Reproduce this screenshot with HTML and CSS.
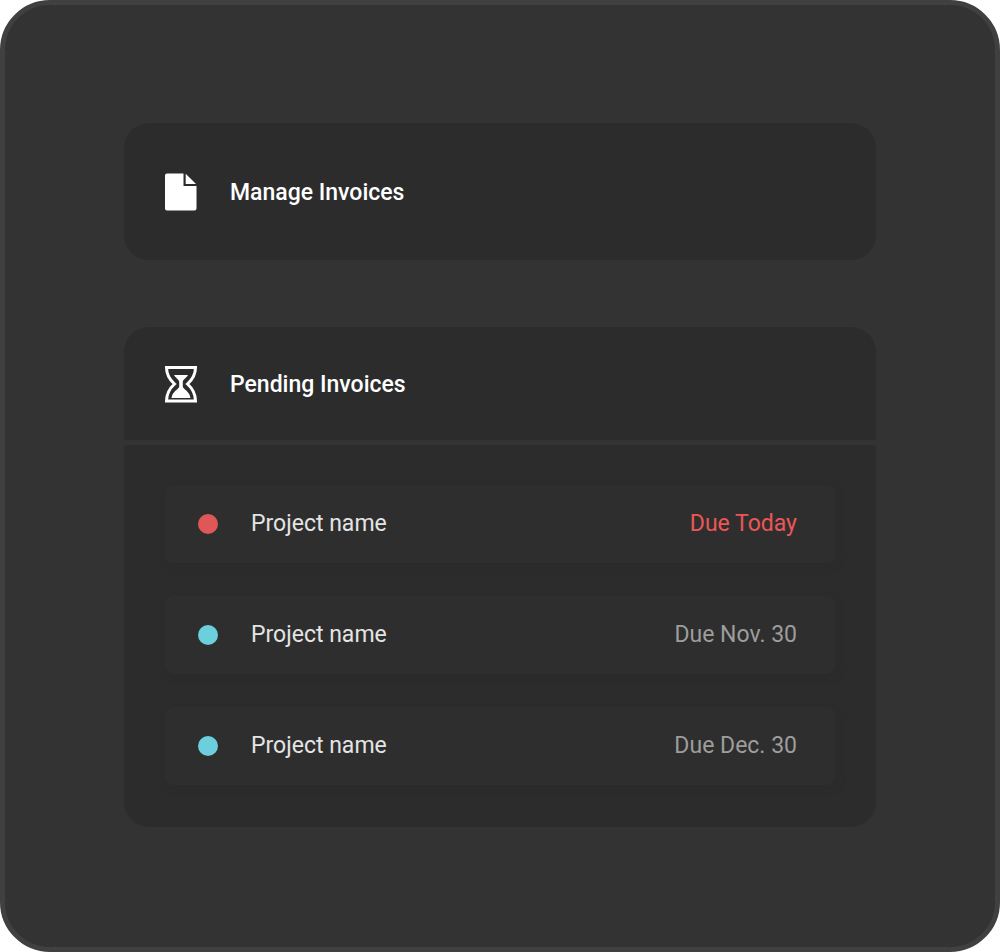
FILE: index.html
```html
<!DOCTYPE html>
<html lang="en">
<head>
<meta charset="utf-8">
<meta name="viewport" content="width=device-width, initial-scale=1">
<title>Invoices</title>
<link rel="stylesheet" href="styles.css">
</head>
<body>
<main class="panel">
  <section class="card">
    <header class="card-header card-header-single">
      <svg class="icon" viewBox="0 0 34 38" aria-hidden="true">
        <path fill="#fff" d="M3 0.5H19.5V13H32.500V35.500Q32.500 37.500 30.500 37.500H3Q1 37.500 1 35.500V2.500Q1 0.500 3 0.500Z"/>
        <path fill="#fff" d="M21.700 0.800L32 11H21.700Z"/>
      </svg>
      <h2 class="title">Manage Invoices</h2>
    </header>
  </section>

  <section class="card">
    <header class="card-header card-header-list">
      <svg class="icon" viewBox="0 0 34 38" aria-hidden="true">
        <path fill="none" stroke="#fff" stroke-width="3" d="M2.500 2.500H31.500C31.500 10 28.500 14.500 23.500 19C28.500 23.500 31.500 28 31.500 36H2.500C2.500 28 5.500 23.500 10.500 19C5.500 14.500 2.500 10 2.500 2.500Z"/>
        <path fill="#fff" d="M10 10H24C22.500 13 18.800 14.500 18.800 17V21.500C18.800 24 25.500 26 26.500 33H7.500C8.500 26 15.200 24 15.200 21.500V17C15.200 14.500 11.500 13 10 10Z"/>
      </svg>
      <h2 class="title">Pending Invoices</h2>
    </header>
    <ul class="list">
      <li class="item">
        <span class="dot dot-urgent"></span>
        <span class="name">Project name</span>
        <span class="due due-urgent">Due Today</span>
      </li>
      <li class="item">
        <span class="dot"></span>
        <span class="name">Project name</span>
        <span class="due">Due Nov. 30</span>
      </li>
      <li class="item">
        <span class="dot"></span>
        <span class="name">Project name</span>
        <span class="due">Due Dec. 30</span>
      </li>
    </ul>
  </section>
</main>
</body>
</html>
```
FILE: styles.css
```css
* {
  box-sizing: border-box;
}

body {
  margin: 0;
  background: #fff;
  font-family: Roboto, "Liberation Sans", sans-serif;
  font-size: 23px;
  line-height: 28px;
}

.panel {
  display: flex;
  flex-direction: column;
  gap: 67px;
  min-height: 100vh;
  padding: 118px 119px;
  background: #333;
  border: 5px solid #404040;
  border-radius: 50px;
}

.card {
  background: #2c2c2c;
  border-radius: 25px;
}

.card-header {
  display: flex;
  align-items: center;
  gap: 32px;
  padding: 0 40px;
}

.card-header-single {
  padding-top: 50px;
  padding-bottom: 49px;
}

.card-header-list {
  padding-top: 38px;
  padding-bottom: 37px;
  border-bottom: 5px solid #333;
}

.icon {
  width: 34px;
  height: 38px;
}

.title {
  margin: 0;
  padding-top: 2px;
  font-size: 23px;
  font-weight: 500;
  color: #fff;
}

.list {
  display: flex;
  flex-direction: column;
  gap: 33px;
  margin: 0;
  padding: 40px 41px 42px;
  list-style: none;
}

.item {
  display: flex;
  align-items: center;
  padding: 25px 38px 25px 33px;
  background: #2e2e2e;
  border-radius: 8px;
  box-shadow: 3px 4px 6px #2b2b2b;
}

.dot {
  width: 20px;
  height: 20px;
  margin-right: 33px;
  border-radius: 50%;
  background: #6ccfdc;
}

.dot-urgent {
  background: #e05757;
}

.name {
  flex: 1;
  color: #e4e4e4;
}

.due {
  color: #9d9d9d;
}

.due-urgent {
  color: #eb5757;
}
```
